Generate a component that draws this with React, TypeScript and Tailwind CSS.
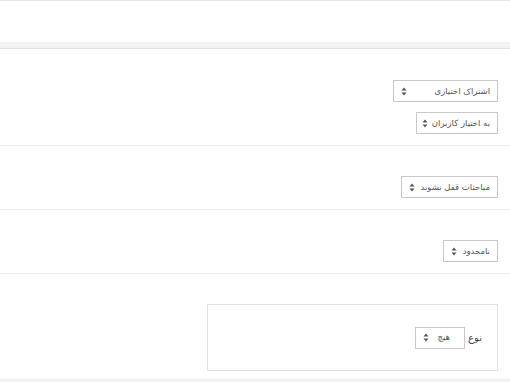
const FONT = '"DejaVu Sans", "Noto Sans", sans-serif';

function Caret() {
  return (
    <svg width="6" height="9" viewBox="0 0 6 9" className="shrink-0">
      <path d="M3 0.5 L5.5 3.5 L0.5 3.5 Z" fill="#555" />
      <path d="M3 8.5 L5.5 5.5 L0.5 5.5 Z" fill="#555" />
    </svg>
  );
}

function Select({ label, width }: { label: string; width: number }) {
  return (
    <div
      className="flex h-[22px] items-center justify-between gap-[4px] whitespace-nowrap border border-[#c8c8c8] bg-white pr-[7px] pl-[7px] text-[8.5px] text-[#555]"
      style={{ width }}
    >
      <span className="leading-none">{label}</span>
      <Caret />
    </div>
  );
}

export default function App() {
  return (
    <div dir="rtl" className="h-[382px] w-[510px] overflow-hidden bg-white" style={{ fontFamily: FONT }}>
      {/* top strip */}
      <div className="h-[42px] border-t border-[#e6e6e6]" />
      <div className="h-[7px] border-b border-[#e2e2e2] bg-[#f3f3f3]" />

      {/* section 1 */}
      <div className="flex flex-col items-start gap-[10px] border-b border-[#ececec] pt-[31px] pr-[12px] pb-[11px]">
        <Select label="اشتراک اختیاری" width={105} />
        <Select label="به اختیار کاربران" width={82} />
      </div>

      {/* section 2 */}
      <div className="border-b border-[#ececec] pt-[30px] pr-[12px] pb-[11px]">
        <Select label="مباحثات قفل نشوند" width={97} />
      </div>

      {/* section 3 */}
      <div className="border-b border-[#ececec] pt-[30px] pr-[12px] pb-[11px]">
        <Select label="نامحدود" width={55} />
      </div>

      {/* section 4 */}
      <div className="pt-[30px] pr-[12px] pb-[8px]">
        <div className="flex h-[67px] w-[291px] items-center gap-[3px] border border-[#e2e2e2] pr-[15px]">
          <span className="text-[10px] text-[#444]">نوع</span>
          <div className="flex h-[22px] w-[50px] items-center justify-between border border-[#c8c8c8] pr-[14px] pl-[7px] text-[8.5px] text-[#555]">
            <span className="leading-none">هیچ</span>
            <Caret />
          </div>
        </div>
      </div>
      <div className="h-[4px] border-t border-[#ececec] bg-[#f3f3f3]" />
    </div>
  );
}
